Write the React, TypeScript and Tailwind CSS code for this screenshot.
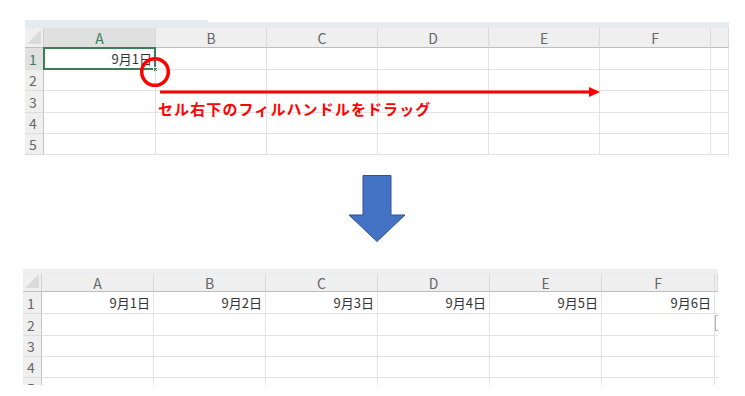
const jp = "font-['Noto_Sans_CJK_JP','Noto_Sans',sans-serif]";

type SheetProps = {
  bandClass: string;
  headerH: string;
  cols: { label: string; w: string }[];
  rows: string[];
  values: string[];
  selectA1?: boolean;
};

function Corner({ h }: { h: string }) {
  return (
    <div className={`w-[19px] ${h} shrink-0 border-r border-b border-r-[#cfcfcf] border-b-[#bdbdbd] bg-[#efefef] flex items-end justify-end p-[2px]`}>
      <svg width="16" height="16" viewBox="0 0 16 16">
        <polygon points="0,16 16,0 16,16" fill="#dadada" />
      </svg>
    </div>
  );
}

function Sheet({ bandClass, headerH, cols, rows, values, selectA1 }: SheetProps) {
  return (
    <div className={`flex flex-col ${jp}`}>
      {bandClass === "top" ? (
        <div className="flex items-end h-[8px]">
          <div className="w-[183px] h-[8px] bg-[#e7ebee]" />
          <div className="flex-1 h-[6px] bg-[#e7ebee]" />
        </div>
      ) : (
        <div className="h-[5px] bg-[#eceef0]" />
      )}
      <div className="flex">
        <Corner h={headerH} />
        {cols.map((c, i) => (
          <div
            key={i}
            className={`${c.w} ${headerH} shrink-0 border-r border-b border-r-[#dadada] border-b-[#bdbdbd] flex items-center justify-center text-[14px] leading-none ${
              selectA1 && i === 0 ? "bg-[#e0e0e0] text-[#3c7e58]" : "bg-[#efefef] text-[#666]"
            }`}
          >
            {c.label}
          </div>
        ))}
      </div>
      {rows.map((h, r) => (
        <div key={r} className="flex">
          <div
            className={`w-[19px] ${h} shrink-0 border-r border-b border-r-[#c4c4c4] border-b-[#dcdcdc] flex items-center pl-[4px] text-[14px] leading-none ${
              selectA1 && r === 0 ? "bg-[#e0e0e0] text-[#3c7e58]" : "bg-[#efefef] text-[#666]"
            }`}
          >
            {r + 1}
          </div>
          {cols.map((c, i) => (
            <div
              key={i}
              className={`relative ${c.w} ${h} shrink-0 border-r border-b border-[#e2e2e2] flex items-center justify-end pr-[3px] text-[13px] leading-none text-[#333]`}
            >
              {r === 0 ? values[i] : ""}
              {selectA1 && r === 0 && i === 0 && (
                <>
                  <div className="absolute -left-px -top-px -right-px -bottom-px border-2 border-[#3c7e58]" />
                  <div className="absolute -right-[3px] -bottom-[3px] w-[5px] h-[5px] bg-[#3c7e58] border border-white" />
                </>
              )}
            </div>
          ))}
        </div>
      ))}
    </div>
  );
}

export default function App() {
  const topCols = [
    { label: "A", w: "w-[112px]" },
    { label: "B", w: "w-[111px]" },
    { label: "C", w: "w-[111px]" },
    { label: "D", w: "w-[111px]" },
    { label: "E", w: "w-[111px]" },
    { label: "F", w: "w-[111px]" },
    { label: "", w: "w-[18px]" },
  ];
  const bottomCols = [
    { label: "A", w: "w-[112px]" },
    { label: "B", w: "w-[112px]" },
    { label: "C", w: "w-[112px]" },
    { label: "D", w: "w-[112px]" },
    { label: "E", w: "w-[112px]" },
    { label: "F", w: "w-[113px]" },
    { label: "", w: "w-[3px]" },
  ];

  return (
    <div className="w-[745px] h-[396px] bg-white overflow-hidden pt-[20px]">
      {/* before */}
      <div className="relative ml-[25px] w-[704px] overflow-hidden">
        <Sheet
          bandClass="top"
          headerH="h-[20px]"
          cols={topCols}
          rows={["h-[22px]", "h-[21px]", "h-[22px]", "h-[21px]", "h-[21px]"]}
          values={["9月1日"]}
          selectA1
        />
        <svg className="absolute left-[114px] top-[36px]" width="32" height="32" viewBox="0 0 32 32">
          <circle cx="16" cy="16" r="13.3" fill="none" stroke="#ff0000" strokeWidth="3.5" />
        </svg>
        <svg className="absolute left-[134px] top-[66px]" width="442" height="12" viewBox="0 0 442 12">
          <line x1="1" y1="6" x2="434" y2="6" stroke="#ff0000" strokeWidth="3" />
          <polygon points="430,1 441,6 430,11" fill="#ff0000" />
        </svg>
        <div className={`absolute left-[133px] top-[79px] text-[15px] leading-[20px] font-bold tracking-[1.1px] text-[#ff0000] ${jp}`}>
          セル右下のフィルハンドルをドラッグ
        </div>
      </div>

      {/* arrow */}
      <div className="mt-[20px] ml-[348px]">
        <svg width="58" height="68" viewBox="0 0 58 68">
          <polygon
            points="15,0.5 43,0.5 43,40 57,40 29,66.5 1,40 15,40"
            fill="#4472c4"
            stroke="#2f528f"
            strokeWidth="1"
          />
        </svg>
      </div>

      {/* after */}
      <div className="relative mt-[26px] ml-[23px] w-[695px] h-[116px] overflow-hidden">
        <Sheet
          bandClass="bottom"
          headerH="h-[18px]"
          cols={bottomCols}
          rows={["h-[22px]", "h-[22px]", "h-[21px]", "h-[21px]", "h-[21px]"]}
          values={["9月1日", "9月2日", "9月3日", "9月4日", "9月5日", "9月6日"]}
        />
        <div className="absolute left-[692px] top-[46px] w-[3px] h-[16px] border border-r-0 border-[#b4b4b4]" />
      </div>
    </div>
  );
}
